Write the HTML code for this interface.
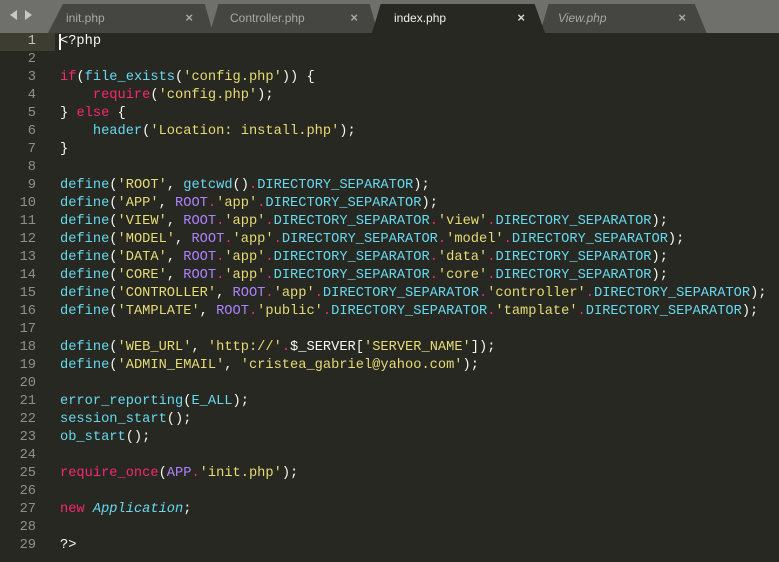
<!DOCTYPE html><html><head><style>
body{margin:0;width:779px;height:562px;background:#272822;overflow:hidden;font-family:"Liberation Mono",monospace}
.tabs{position:absolute;left:0;top:0;width:779px;height:33px;background:#6f6f6b}
.tab{position:absolute;top:4px;height:29px;background:#454542;font-family:"Liberation Sans",sans-serif;font-size:12px;color:#a8a8a4;line-height:28px}
.tab span{position:absolute;left:18px}
.tab b{position:absolute;right:20px;font-weight:bold;color:#a9a9a5;font-size:13px}
.code{position:absolute;top:33px;left:0;width:779px}
.ln{position:absolute;left:0;width:36px;text-align:right;color:#8f908a;font-size:13.7px;line-height:18px}
pre{position:absolute;left:60px;top:0;margin:0;font-family:"Liberation Mono",monospace;font-size:13.7px;line-height:18px;color:#f8f8f2}
.k{color:#f92672}.f{color:#66d9ef}.s{color:#e6db74}.c{color:#ae81ff}.i{color:#66d9ef;font-style:italic}
</style></head><body>
<div class="tabs">
<div style="position:absolute;left:10px;top:10px;width:0;height:0;border-top:5px solid transparent;border-bottom:5px solid transparent;border-right:7px solid #c8c8c4"></div>
<div style="position:absolute;left:25px;top:10px;width:0;height:0;border-top:5px solid transparent;border-bottom:5px solid transparent;border-left:7px solid #c8c8c4"></div>
<div class="tab" style="left:48px;width:165px;clip-path:polygon(9% 0,95% 0,100% 100%,0 100%)"><span style="left:18px">init.php</span><b>×</b></div>
<div class="tab" style="left:210px;width:168px;clip-path:polygon(5% 0,95% 0,100% 100%,0 100%)"><span style="left:20px">Controller.php</span><b>×</b></div>
<div class="tab" style="left:540px;width:170px;clip-path:polygon(5% 0,91% 0,98% 100%,0 100%)"><span style="left:18px;font-style:italic">View.php</span><b style="right:24px">×</b></div>
<div class="tab" style="left:372px;width:173px;background:#272822;color:#f0f0ec;clip-path:polygon(5% 0,94% 0,100% 100%,0 100%)"><span style="left:22px">index.php</span><b style="color:#d8d8d4">×</b></div>
</div>
<div class="code">
<div style="position:absolute;left:0;top:0;width:55px;height:18px;background:#3e3d32"></div>
<div style="position:absolute;left:59px;top:1px;width:2px;height:16px;background:#f8f8f0"></div>
<div class="ln" style="top:0"><span style="color:#c2c2bf">1</span><br>2<br>3<br>4<br>5<br>6<br>7<br>8<br>9<br>10<br>11<br>12<br>13<br>14<br>15<br>16<br>17<br>18<br>19<br>20<br>21<br>22<br>23<br>24<br>25<br>26<br>27<br>28<br>29</div>
<pre>&lt;?php

<span class="k">if</span>(<span class="f">file_exists</span>(<span class="s">'config.php'</span>)) {
    <span class="k">require</span>(<span class="s">'config.php'</span>);
} <span class="k">else</span> {
    <span class="f">header</span>(<span class="s">'Location: install.php'</span>);
}

<span class="f">define</span>(<span class="s">'ROOT'</span>, <span class="f">getcwd</span>()<span class="k">.</span><span class="f">DIRECTORY_SEPARATOR</span>);
<span class="f">define</span>(<span class="s">'APP'</span>, <span class="c">ROOT</span><span class="k">.</span><span class="s">'app'</span><span class="k">.</span><span class="f">DIRECTORY_SEPARATOR</span>);
<span class="f">define</span>(<span class="s">'VIEW'</span>, <span class="c">ROOT</span><span class="k">.</span><span class="s">'app'</span><span class="k">.</span><span class="f">DIRECTORY_SEPARATOR</span><span class="k">.</span><span class="s">'view'</span><span class="k">.</span><span class="f">DIRECTORY_SEPARATOR</span>);
<span class="f">define</span>(<span class="s">'MODEL'</span>, <span class="c">ROOT</span><span class="k">.</span><span class="s">'app'</span><span class="k">.</span><span class="f">DIRECTORY_SEPARATOR</span><span class="k">.</span><span class="s">'model'</span><span class="k">.</span><span class="f">DIRECTORY_SEPARATOR</span>);
<span class="f">define</span>(<span class="s">'DATA'</span>, <span class="c">ROOT</span><span class="k">.</span><span class="s">'app'</span><span class="k">.</span><span class="f">DIRECTORY_SEPARATOR</span><span class="k">.</span><span class="s">'data'</span><span class="k">.</span><span class="f">DIRECTORY_SEPARATOR</span>);
<span class="f">define</span>(<span class="s">'CORE'</span>, <span class="c">ROOT</span><span class="k">.</span><span class="s">'app'</span><span class="k">.</span><span class="f">DIRECTORY_SEPARATOR</span><span class="k">.</span><span class="s">'core'</span><span class="k">.</span><span class="f">DIRECTORY_SEPARATOR</span>);
<span class="f">define</span>(<span class="s">'CONTROLLER'</span>, <span class="c">ROOT</span><span class="k">.</span><span class="s">'app'</span><span class="k">.</span><span class="f">DIRECTORY_SEPARATOR</span><span class="k">.</span><span class="s">'controller'</span><span class="k">.</span><span class="f">DIRECTORY_SEPARATOR</span>);
<span class="f">define</span>(<span class="s">'TAMPLATE'</span>, <span class="c">ROOT</span><span class="k">.</span><span class="s">'public'</span><span class="k">.</span><span class="f">DIRECTORY_SEPARATOR</span><span class="k">.</span><span class="s">'tamplate'</span><span class="k">.</span><span class="f">DIRECTORY_SEPARATOR</span>);

<span class="f">define</span>(<span class="s">'WEB_URL'</span>, <span class="s">'http://'</span><span class="k">.</span>$_SERVER[<span class="s">'SERVER_NAME'</span>]);
<span class="f">define</span>(<span class="s">'ADMIN_EMAIL'</span>, <span class="s">'cristea_gabriel@yahoo.com'</span>);

<span class="f">error_reporting</span>(<span class="f">E_ALL</span>);
<span class="f">session_start</span>();
<span class="f">ob_start</span>();

<span class="k">require_once</span>(<span class="c">APP</span><span class="k">.</span><span class="s">'init.php'</span>);

<span class="k">new</span> <span class="i">Application</span>;

?&gt;</pre>
</div>
</body></html>
